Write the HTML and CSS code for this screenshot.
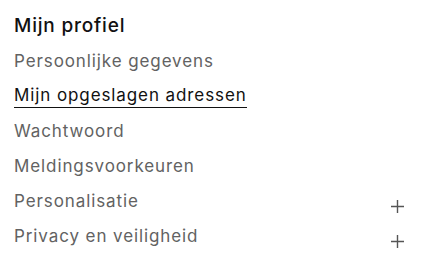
FILE: index.html
```html
<!DOCTYPE html>
<html lang="nl">
<head>
    <meta charset="UTF-8">
    <title>Mijn profiel</title>
    <link rel="stylesheet" href="styles.css">
</head>
<body>
    <nav class="profile-menu">
        <h2 class="menu-title">Mijn profiel</h2>
        <ul class="menu-list">
            <li class="menu-item"><a href="#">Persoonlijke gegevens</a></li>
            <li class="menu-item active"><a href="#">Mijn opgeslagen adressen</a></li>
            <li class="menu-item"><a href="#">Wachtwoord</a></li>
            <li class="menu-item"><a href="#">Meldingsvoorkeuren</a></li>
            <li class="menu-item expandable">
                <a href="#">Personalisatie</a>
                <svg class="plus" width="13" height="13" viewBox="0 0 13 13"><path d="M6.5 0v13M0 6.5h13" stroke="#555" stroke-width="1.4" fill="none"/></svg>
            </li>
            <li class="menu-item expandable">
                <a href="#">Privacy en veiligheid</a>
                <svg class="plus" width="13" height="13" viewBox="0 0 13 13"><path d="M6.5 0v13M0 6.5h13" stroke="#555" stroke-width="1.4" fill="none"/></svg>
            </li>
        </ul>
    </nav>
</body>
</html>
```

FILE: styles.css
```css
body {
    margin: 0;
    padding: 0;
    font-family: Inter, "Liberation Sans", sans-serif;
    background: #fff;
}

.profile-menu {
    width: 390px;
    padding: 14px 0 0 14px;
}

.menu-title {
    margin: 0 0 5px;
    font-size: 19px;
    font-weight: 500;
    letter-spacing: 0.8px;
    color: #111;
    line-height: 24px;
}

.menu-list {
    list-style: none;
    margin: 0;
    padding: 0;
}

.menu-item {
    display: flex;
    align-items: center;
    justify-content: space-between;
    height: 35px;
}

.menu-item a {
    font-size: 17px;
    letter-spacing: 0.9px;
    color: #626262;
    text-decoration: none;
    line-height: 22px;
}

.menu-item.active a {
    color: #111;
    padding-bottom: 1px;
    border-bottom: 1.5px solid #111;
}

.plus {
    margin-top: 11px;
}
```
